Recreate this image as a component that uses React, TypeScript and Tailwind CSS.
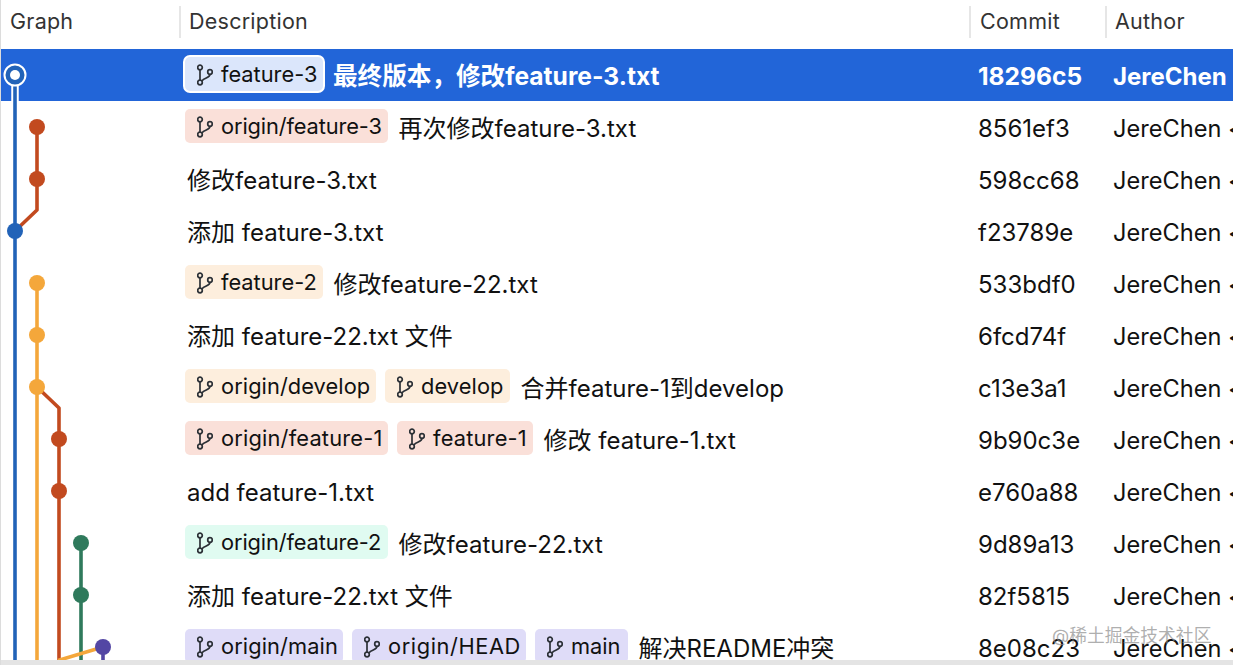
const font = "font-['Inter','Noto_Sans_CJK_SC',sans-serif]";

type Tone = "sel" | "red" | "orange" | "green" | "purple";
const toneClass: Record<Tone, string> = {
  sel: "bg-[#dbe6fb] border-2 border-white h-[38px] rounded-[7px] pl-[12px] pr-[2px] -ml-[2px]",
  red: "bg-[#fae0d9] h-[34px] rounded-[5px] pl-[12px] pr-[2px]",
  orange: "bg-[#fdeedd] h-[34px] rounded-[5px] pl-[12px] pr-[2px]",
  green: "bg-[#e0fbf1] h-[34px] rounded-[5px] pl-[12px] pr-[2px]",
  purple: "bg-[#dfdcf8] h-[34px] rounded-[5px] pl-[12px] pr-[2px]",
};

type Row = { tags?: [string, Tone, string][]; text: string; commit: string };
const rows: Row[] = [
  { tags: [["feature-3", "sel", "w-[142px]"]], text: "最终版本，修改feature-3.txt", commit: "18296c5" },
  { tags: [["origin/feature-3", "red", "w-[203px] tracking-[-0.12px]"]], text: "再次修改feature-3.txt", commit: "8561ef3" },
  { text: "修改feature-3.txt", commit: "598cc68" },
  { text: "添加 feature-3.txt", commit: "f23789e" },
  { tags: [["feature-2", "orange", "w-[138px]"]], text: "修改feature-22.txt", commit: "533bdf0" },
  { text: "添加 feature-22.txt 文件", commit: "6fcd74f" },
  { tags: [["origin/develop", "orange", "w-[191px] tracking-[0.08px]"], ["develop", "orange", "w-[125px] tracking-[0.1px]"]], text: "合并feature-1到develop", commit: "c13e3a1" },
  { tags: [["origin/feature-1", "red", "w-[203px] tracking-[0.2px]"], ["feature-1", "red", "w-[136px] tracking-[0.2px]"]], text: "修改 feature-1.txt", commit: "9b90c3e" },
  { text: "add feature-1.txt", commit: "e760a88" },
  { tags: [["origin/feature-2", "green", "w-[203px] tracking-[-0.12px]"]], text: "修改feature-22.txt", commit: "9d89a13" },
  { text: "添加 feature-22.txt 文件", commit: "82f5815" },
  { tags: [["origin/main", "purple", "w-[158px] tracking-[0.1px]"], ["origin/HEAD", "purple", "w-[174px] tracking-[0.6px]"], ["main", "purple", "w-[93px]"]], text: "解决README冲突", commit: "8e08c23" },
];

function BranchIcon() {
  return (
    <svg width="16" height="22" viewBox="0 0 16 22" fill="none" stroke="#2b3036" strokeWidth="1.7" className="shrink-0">
      <circle cx="3" cy="3.5" r="2.3" />
      <circle cx="3" cy="18.5" r="2.3" />
      <circle cx="13" cy="8" r="2.3" />
      <path d="M3 5.8V16.2" />
      <path d="M13 10.3C13 14 7.5 13.5 4.8 17" />
    </svg>
  );
}

function Tag({ label, tone, extra }: { label: string; tone: Tone; extra: string }) {
  return (
    <span className={`flex items-center shrink-0 whitespace-nowrap gap-[8px] mb-[2px] pt-[2px] text-[21.8px] text-[#111] font-normal ${toneClass[tone]} ${extra}`}>
      <BranchIcon />
      <span>{label}</span>
    </span>
  );
}

function Graph() {
  const c = (i: number) => 75 + 52 * i;
  const blue = "#2263b8", red = "#c24a1f", yellow = "#f4a73b", green = "#2f7a5c", purple = "#5346a4";
  return (
    <svg width="130" height="612" viewBox="0 49 130 612" className="absolute left-[-1px] top-0" fill="none" strokeWidth="3.6">
      <path d="M15 85V101" stroke="#fff" strokeWidth="7.5" />
      <path d="M15 75V661" stroke={blue} />
      <path d="M37 127V210L15 231" stroke={red} strokeLinejoin="round" />
      <path d="M37 283V661" stroke={yellow} />
      <path d="M37 387L59 408V661" stroke={red} strokeLinejoin="round" />
      <path d="M81 543V661" stroke={green} />
      <path d="M103 647V661" stroke={purple} />
      <path d="M103 647L58 660.5" stroke={yellow} />
      <circle cx="15" cy={c(0)} r="10.5" fill={blue} stroke="#fff" strokeWidth="2" />
      <circle cx="15" cy={c(0)} r="5" fill="#fff" stroke="none" />
      <g stroke="none">
        <circle cx="37" cy={c(1)} r="8" fill={red} />
        <circle cx="37" cy={c(2)} r="8" fill={red} />
        <circle cx="15" cy={c(3)} r="8" fill={blue} />
        <circle cx="37" cy={c(4)} r="8" fill={yellow} />
        <circle cx="37" cy={c(5)} r="8" fill={yellow} />
        <circle cx="37" cy={c(6)} r="8" fill={yellow} />
        <circle cx="59" cy={c(7)} r="8" fill={red} />
        <circle cx="59" cy={c(8)} r="8" fill={red} />
        <circle cx="81" cy={c(9)} r="8" fill={green} />
        <circle cx="81" cy={c(10)} r="8" fill={green} />
        <circle cx="103" cy={c(11)} r="8" fill={purple} />
      </g>
    </svg>
  );
}

function HeaderCell({ label, className, gapClass }: { label: string; className: string; gapClass: string }) {
  return (
    <div className={`flex items-center h-full ${className}`}>
      <div className={`w-[2px] h-[32px] bg-[#e6e6e6] -mt-[5px] ${gapClass}`} />
      <span className="-mt-[5px]">{label}</span>
    </div>
  );
}

export default function App() {
  return (
    <div className={`${font} relative w-[1233px] h-[665px] overflow-hidden bg-white flex flex-col border-l border-[#dcdcdc] leading-none`}>
      <div className="flex items-center h-[49px] shrink-0 text-[#333] text-[21.5px] tracking-[0.25px]">
        <div className="w-[178px] pl-[9px] -mt-[5px]">Graph</div>
        <HeaderCell label="Description" className="w-[790px]" gapClass="mr-[8px]" />
        <HeaderCell label="Commit" className="w-[136px]" gapClass="mr-[9px]" />
        <HeaderCell label="Author" className="flex-1" gapClass="mr-[8px]" />
      </div>
      <div className="relative flex-1 overflow-hidden">
        {rows.map((r, i) => {
          const selected = i === 0;
          return (
            <div key={r.commit} className={`flex items-center h-[52px] ${selected ? "bg-[#2265d8] text-white font-bold text-[24.6px]" : "text-[#111] text-[24px]"}`}>
              <div className="w-[182px] shrink-0" />
              <div className="w-[795px] shrink-0 flex items-center gap-[9px] pl-[2px]">
                {r.tags ? r.tags.map(([l, t, e]) => <Tag key={l} label={l} tone={t} extra={e} />) : null}
                <span className={`whitespace-nowrap mt-[3px] ${selected ? "-ml-[1px]" : r.tags ? "ml-[1.5px]" : "ml-[2px]"}`}>{r.text}</span>
              </div>
              <div className="w-[135px] shrink-0 mt-[3px]">{r.commit}</div>
              <div className={`flex-1 whitespace-nowrap overflow-hidden mt-[3px] ${selected ? "text-[24px]" : "text-[23.6px]"}`}>JereChen &lt;jerechen@example.com&gt;</div>
            </div>
          );
        })}
        <Graph />
        <div className="absolute left-[1051px] top-[578px] text-[17.8px] text-[#8c8c8c]/70 whitespace-nowrap">@稀土掘金技术社区</div>
      </div>
      <div className="h-[5px] shrink-0 bg-[#e4e4e4]" />
    </div>
  );
}
